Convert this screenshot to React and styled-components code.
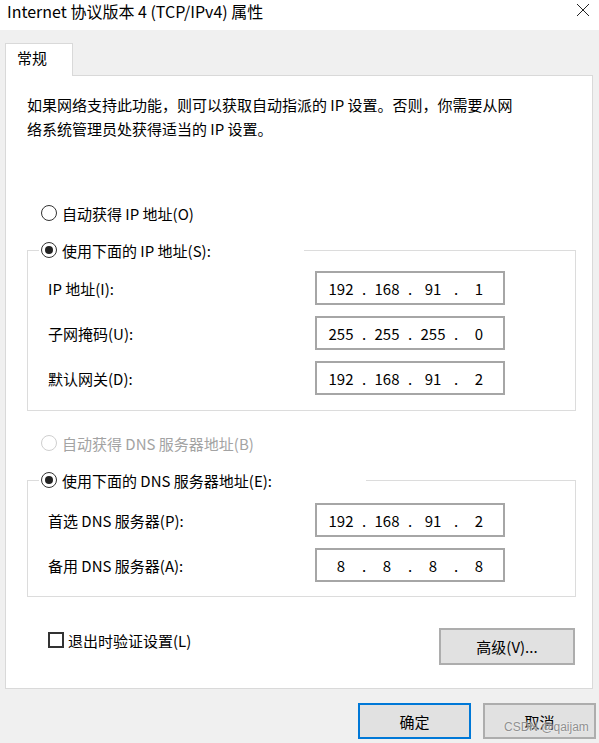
import styled, { createGlobalStyle } from 'styled-components';

const GlobalStyle = createGlobalStyle`
  html, body {
    margin: 0;
    padding: 0;
    background: #f0f0f0;
  }
  body {
    font-family: "Microsoft YaHei", "Noto Sans CJK SC", "Noto Sans", sans-serif;
    color: #000;
  }
  * {
    box-sizing: border-box;
  }
`;

const Window = styled.div`
  position: relative;
  width: 599px;
  height: 743px;
  overflow: hidden;
  background: #f0f0f0;
`;

const TitleBar = styled.div`
  height: 30px;
  background: #fff;
  display: flex;
  justify-content: space-between;
  align-items: flex-start;
  padding: 0 9px 0 7px;
`;

const Title = styled.div`
  font-size: 16px;
  line-height: 22px;
`;

const CloseButton = styled.div`
  padding-top: 3px;
  display: flex;
`;

const Body = styled.div`
  padding: 13px 6px 0 5px;
`;

const TabStrip = styled.div`
  display: flex;
`;

const Tab = styled.div`
  position: relative;
  z-index: 1;
  width: 68px;
  height: 33px;
  margin-bottom: -1px;
  padding-left: 11px;
  background: #fff;
  border: 1px solid #d9d9d9;
  border-bottom: none;
  font-size: 15px;
  line-height: 28px;
`;

const Panel = styled.div`
  height: 614px;
  background: #fff;
  border: 1px solid #d9d9d9;
  padding: 17px 17px 0 21px;
`;

const Description = styled.p`
  margin: 0;
  font-size: 15px;
  line-height: 24px;
`;

const RadioRow = styled.label`
  display: flex;
  align-items: center;
  height: 24px;
  margin-top: ${({ $gap }) => $gap}px;
  margin-left: 12px;
  padding-left: 2px;
  font-size: 15px;
  color: ${({ $disabled }) => ($disabled ? '#a3a3a3' : '#000')};
`;

const RadioCircle = styled.span`
  width: 16px;
  height: 16px;
  margin-right: 5px;
  border-radius: 50%;
  border: 1.5px solid ${({ $disabled }) => ($disabled ? '#cfcfcf' : '#333')};
  display: flex;
  align-items: center;
  justify-content: center;
  flex-shrink: 0;

  &::after {
    content: '';
    width: 8px;
    height: 8px;
    border-radius: 50%;
    background: #222;
    display: ${({ $checked }) => ($checked ? 'block' : 'none')};
  }
`;

const Group = styled.fieldset`
  margin: ${({ $gap }) => $gap}px 0 0 0;
  width: 549px;
  padding: 0 0 ${({ $bottom }) => $bottom}px 11px;
  border: 1px solid #dcdcdc;
  min-width: 0;
`;

const Legend = styled.legend`
  width: ${({ $width }) => $width}px;
  padding: 0 0 0 2px;
  height: 24px;
  display: flex;
  align-items: center;
  font-size: 15px;
  background: #fff;
`;

const Rows = styled.div`
  display: flex;
  flex-direction: column;
  gap: 11px;
  padding: ${({ $top }) => $top}px 0 0 9px;
`;

const FieldRow = styled.div`
  display: grid;
  grid-template-columns: 267px 190px;
  align-items: center;
`;

const FieldLabel = styled.span`
  font-size: 15px;
`;

const IpBox = styled.div`
  height: 34px;
  border: 2px solid #a6a6a6;
  background: #fff;
  display: flex;
  align-items: center;
  padding-left: 6px;
  font-size: 15px;
`;

const Segment = styled.span`
  width: 36px;
  text-align: center;
`;

const Dot = styled.span`
  width: 10px;
  text-align: center;
`;

const BottomRow = styled.div`
  display: flex;
  justify-content: space-between;
  align-items: flex-start;
  margin-top: 31px;
  padding-left: 21px;
`;

const CheckRow = styled.label`
  display: flex;
  align-items: center;
  height: 24px;
  font-size: 15px;
`;

const CheckBox = styled.span`
  width: 16px;
  height: 16px;
  margin-right: 4px;
  border: 2px solid #333;
  background: #fff;
`;

const Button = styled.button`
  width: ${({ $width }) => $width}px;
  height: ${({ $height }) => $height}px;
  background: #e1e1e1;
  border: ${({ $primary }) => ($primary ? '2px solid #0078d7' : '2px solid #adadad')};
  font-family: inherit;
  font-size: 15px;
  color: #000;
  padding: 0;
`;

const Footer = styled.div`
  display: flex;
  justify-content: flex-end;
  gap: 12px;
  margin-top: 14px;
  margin-right: -3px;
`;

const Watermark = styled.div`
  position: absolute;
  left: 504px;
  top: 720px;
  font-family: "Liberation Sans", Arial, sans-serif;
  font-size: 12px;
  color: #8f8f8f;
  text-shadow: 0 0 2px #fff;
  pointer-events: none;
`;

const IpField = ({ value }) => {
  const parts = value.split('.');
  return (
    <IpBox>
      {parts.map((p, i) => (
        <span key={i} style={{ display: 'contents' }}>
          <Segment>{p}</Segment>
          {i < parts.length - 1 && <Dot>.</Dot>}
        </span>
      ))}
    </IpBox>
  );
};

const Radio = ({ checked, disabled }) => (
  <RadioCircle $checked={checked} $disabled={disabled} />
);

const ipRows = [
  ['IP 地址(I):', '192.168.91.1'],
  ['子网掩码(U):', '255.255.255.0'],
  ['默认网关(D):', '192.168.91.2'],
];

const dnsRows = [
  ['首选 DNS 服务器(P):', '192.168.91.2'],
  ['备用 DNS 服务器(A):', '8.8.8.8'],
];

export default function App() {
  return (
    <Window>
      <GlobalStyle />
      <TitleBar>
        <Title>Internet 协议版本 4 (TCP/IPv4) 属性</Title>
        <CloseButton>
          <svg width="14" height="14" viewBox="0 0 14 14">
            <path d="M1 1 L13 13 M13 1 L1 13" stroke="#222" strokeWidth="1" fill="none" />
          </svg>
        </CloseButton>
      </TitleBar>

      <Body>
        <TabStrip>
          <Tab>常规</Tab>
        </TabStrip>
        <Panel>
          <Description>
            如果网络支持此功能，则可以获取自动指派的 IP 设置。否则，你需要从网
            <br />
            络系统管理员处获得适当的 IP 设置。
          </Description>

          <RadioRow $gap={60}>
            <Radio />
            自动获得 IP 地址(O)
          </RadioRow>

          <Group $gap={13} $bottom={15}>
            <Legend $width={265}>
              <Radio checked />
              使用下面的 IP 地址(S):
            </Legend>
            <Rows $top={9}>
              {ipRows.map(([label, ip]) => (
                <FieldRow key={label}>
                  <FieldLabel>{label}</FieldLabel>
                  <IpField value={ip} />
                </FieldRow>
              ))}
            </Rows>
          </Group>

          <RadioRow $gap={20} $disabled>
            <Radio disabled />
            自动获得 DNS 服务器地址(B)
          </RadioRow>

          <Group $gap={13} $bottom={14}>
            <Legend $width={327}>
              <Radio checked />
              使用下面的 DNS 服务器地址(E):
            </Legend>
            <Rows $top={11}>
              {dnsRows.map(([label, ip]) => (
                <FieldRow key={label}>
                  <FieldLabel>{label}</FieldLabel>
                  <IpField value={ip} />
                </FieldRow>
              ))}
            </Rows>
          </Group>

          <BottomRow>
            <CheckRow>
              <CheckBox />
              退出时验证设置(L)
            </CheckRow>
            <Button $width={136} $height={37}>高级(V)...</Button>
          </BottomRow>
        </Panel>

        <Footer>
          <Button $primary $width={113} $height={36}>确定</Button>
          <Button $width={113} $height={36}>取消</Button>
        </Footer>
      </Body>
      <Watermark>CSDN @qaijam</Watermark>
    </Window>
  );
}
